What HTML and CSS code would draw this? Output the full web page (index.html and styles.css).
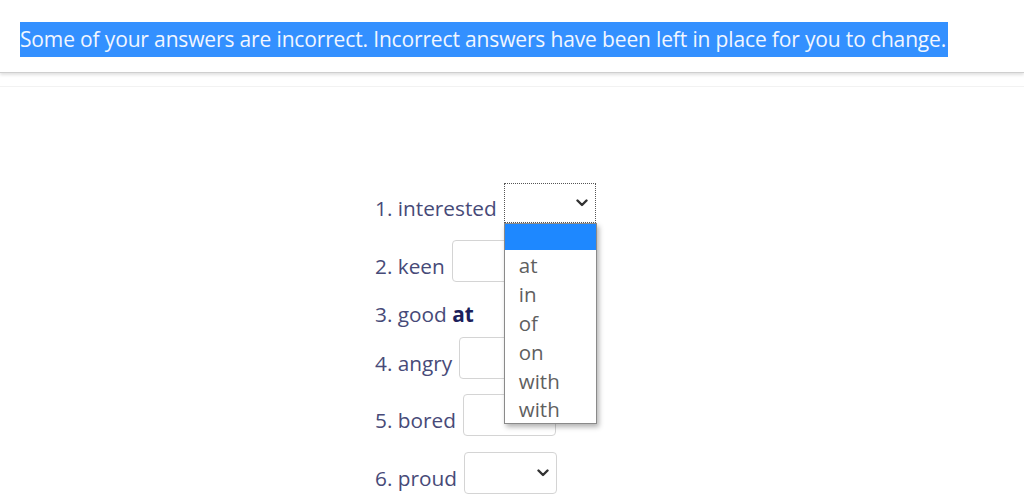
FILE: index.html
```html
<!DOCTYPE html>
<html lang="en">
<head>
<meta charset="utf-8">
<title>Quiz</title>
<link rel="stylesheet" href="styles.css">
</head>
<body>
<header class="feedback">
  <span class="feedback-text">Some of your answers are incorrect. Incorrect answers have been left in place for you to change.</span>
</header>
<div class="divider"></div>
<main class="quiz">
  <ol class="questions">
    <li class="row">
      <span class="label">1. interested</span>
      <div class="select focused">
        <svg class="chev" width="12" height="8" viewBox="0 0 12 8"><polyline points="1.5,1.5 6,6 10.5,1.5" fill="none" stroke="#333" stroke-width="2.4" stroke-linecap="round" stroke-linejoin="round"/></svg>
        <ul class="dropdown">
          <li class="opt active">&nbsp;</li>
          <li class="opt">at</li>
          <li class="opt">in</li>
          <li class="opt">of</li>
          <li class="opt">on</li>
          <li class="opt">with</li>
          <li class="opt">with</li>
        </ul>
      </div>
    </li>
    <li class="row">
      <span class="label">2. keen</span>
      <div class="select"></div>
    </li>
    <li class="row short">
      <span class="label">3. good <b class="answer">at</b></span>
    </li>
    <li class="row">
      <span class="label">4. angry</span>
      <div class="select"></div>
    </li>
    <li class="row">
      <span class="label">5. bored</span>
      <div class="select"></div>
    </li>
    <li class="row">
      <span class="label">6. proud</span>
      <div class="select">
        <svg class="chev" width="12" height="8" viewBox="0 0 12 8"><polyline points="1.5,1.5 6,6 10.5,1.5" fill="none" stroke="#333" stroke-width="2.4" stroke-linecap="round" stroke-linejoin="round"/></svg>
      </div>
    </li>
  </ol>
</main>
</body>
</html>
```

FILE: styles.css
```css
html, body {
  margin: 0;
  padding: 0;
  background: #ffffff;
  font-family: "Open Sans", "Noto Sans", sans-serif;
}

.feedback {
  padding: 22px 20px 15px;
  border-bottom: 1px solid #cfcfcf;
  box-shadow: 0 2px 3px rgba(0, 0, 0, 0.12);
}

.feedback-text {
  display: inline-block;
  background: #3390ff;
  color: #f1f6ff;
  font-size: 21px;
  line-height: 35px;
  letter-spacing: -0.15px;
  padding-right: 2px;
}

.divider {
  margin-top: 13px;
  border-top: 1px solid #f2f2f2;
}

.quiz {
  padding-top: 95px;
}

.questions {
  list-style: none;
  margin: 0 0 0 375px;
  padding: 0;
  display: flex;
  flex-direction: column;
  gap: 15.5px;
}

.row {
  display: flex;
  align-items: center;
  gap: 7px;
  height: 42px;
}

.row.short {
  height: 24px;
}

.label {
  color: #474a78;
  font-size: 20.8px;
  padding-top: 10px;
}

.answer {
  color: #1d1f5c;
  font-weight: 700;
}

.select {
  position: relative;
  box-sizing: border-box;
  width: 93px;
  height: 42px;
  border: 1px solid #d4d4d4;
  border-radius: 4px;
  background: #fff;
}

.select.focused {
  width: 92px;
  height: 40px;
  border: 1px dotted #555;
  border-radius: 0;
}

.chev {
  position: absolute;
  right: 7px;
  top: 50%;
  margin-top: -4px;
}

.dropdown {
  position: absolute;
  left: -1px;
  top: 39px;
  z-index: 5;
  box-sizing: border-box;
  width: 93px;
  margin: 0;
  padding: 0;
  list-style: none;
  background: #fff;
  border: 1px solid #8a8a8a;
  box-shadow: 2px 3px 5px rgba(0, 0, 0, 0.3);
}

.opt {
  padding-left: 14px;
  height: 28.9px;
  line-height: 30px;
  font-size: 20.5px;
  color: #5f5f5f;
}

.opt.active {
  background: #1e88ff;
  height: 26px;
}
```
